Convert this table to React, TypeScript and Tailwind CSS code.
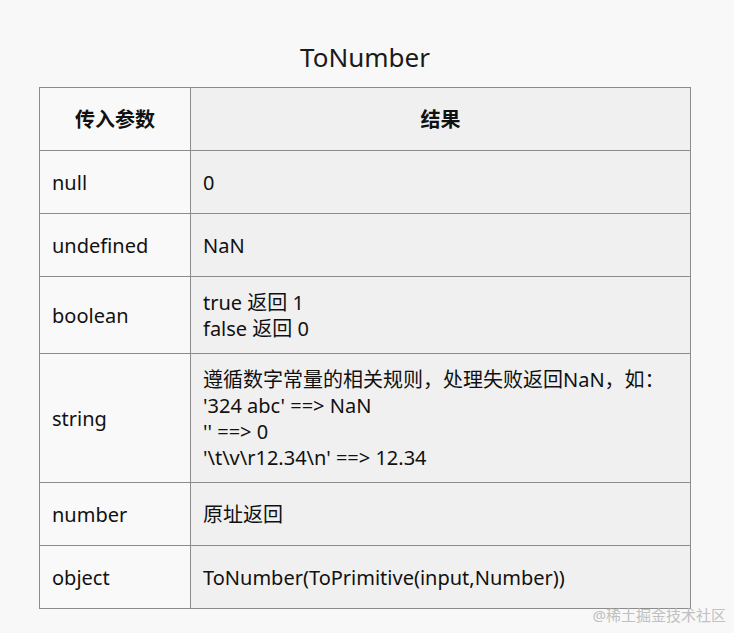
const rows = [
  { key: 'null', value: ['0'], h: 'h-[63px]' },
  { key: 'undefined', value: ['NaN'], h: 'h-[63px]' },
  { key: 'boolean', value: ['true 返回 1', 'false 返回 0'], h: 'h-[77px]' },
  {
    key: 'string',
    value: [
      '遵循数字常量的相关规则，处理失败返回NaN，如：',
      "'324 abc' ==> NaN",
      "'' ==> 0",
      "'\\t\\v\\r12.34\\n' ==> 12.34",
    ],
    h: 'h-[129px]',
  },
  { key: 'number', value: ['原址返回'], h: 'h-[63px]' },
  { key: 'object', value: ['ToNumber(ToPrimitive(input,Number))'], h: 'h-[63px]' },
]

const App = () => {
  return (
    <div
      className="min-h-[633px] w-[734px] bg-[#f8f8f8] text-[#111]"
      style={{ fontFamily: '"Noto Sans", "Noto Sans CJK SC", sans-serif' }}
    >
      <div className="ml-[39px] w-[652px] pt-[40px]">
        <h1 className="mb-[12px] text-center text-[26px] leading-[35px] font-normal text-[#1a1a1a]">
          ToNumber
        </h1>
        <div className="grid grid-cols-[151px_500px] border-t border-l border-[#8c8c8c] text-[20px]">
          <div className="flex h-[63px] items-center justify-center border-r border-b border-[#8c8c8c] bg-[#f9f9f9] pt-[2px] font-bold">
            传入参数
          </div>
          <div className="flex h-[63px] items-center justify-center border-r border-b border-[#8c8c8c] bg-[#f0f0f0] pt-[2px] font-bold">
            结果
          </div>
          {rows.map((row) => (
            <>
              <div
                key={row.key + '-k'}
                className={`flex ${row.h} items-center border-r border-b border-[#8c8c8c] bg-[#f9f9f9] px-[12px] pt-[2px]`}
              >
                {row.key}
              </div>
              <div
                key={row.key + '-v'}
                className={`flex ${row.h} flex-col justify-center border-r border-b border-[#8c8c8c] bg-[#f0f0f0] px-[12px] pt-[2px] leading-[26px]`}
              >
                {row.value.map((line) => (
                  <div key={line}>{line}</div>
                ))}
              </div>
            </>
          ))}
        </div>
      </div>
      <div className="mr-[8px] -mt-[4px] text-right text-[15px] leading-[20px] text-[#c0c0c0]">
        @稀土掘金技术社区
      </div>
    </div>
  )
}

export default App
